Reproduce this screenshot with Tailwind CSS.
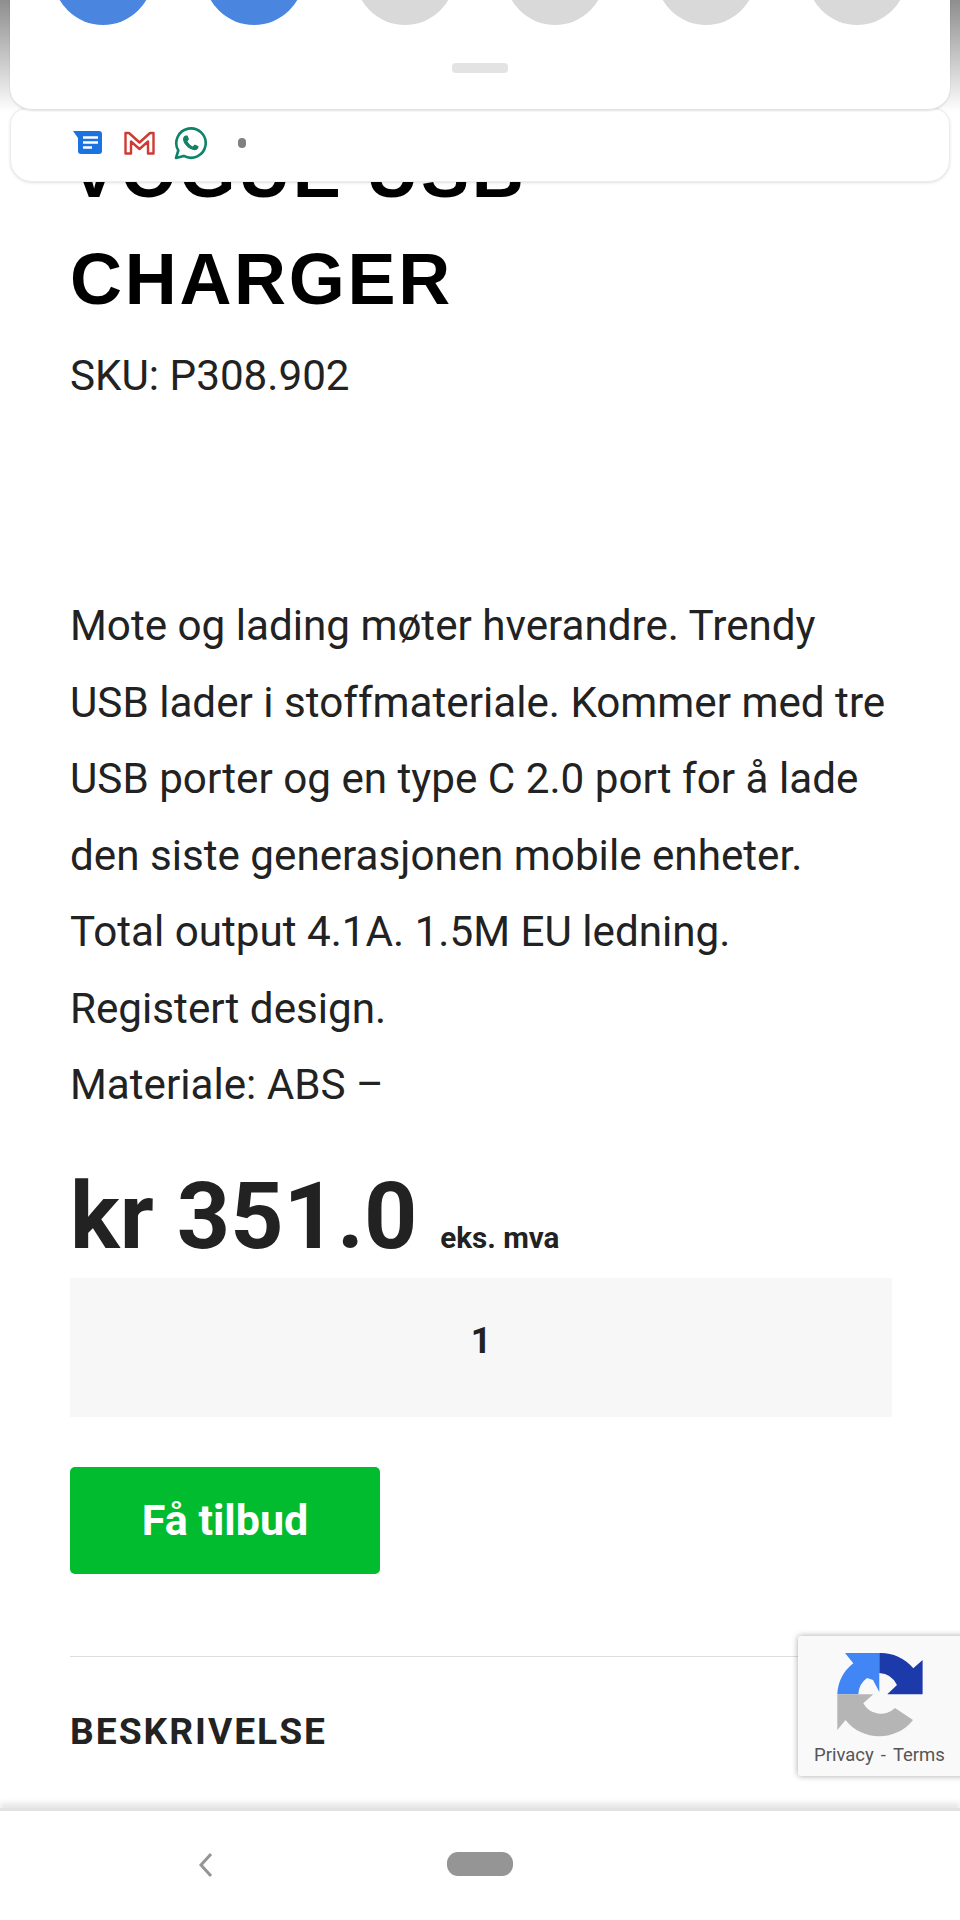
<!DOCTYPE html>
<html lang="nb">
<head>
  <meta charset="UTF-8"/>
  <meta name="viewport" content="width=device-width, initial-scale=1.0"/>
  <title>Vogue USB Charger</title>
  <script src="https://cdn.jsdelivr.net/npm/@tailwindcss/browser@4"></script>
</head>
<body class="bg-white font-['Roboto',sans-serif] text-[#222]">
<div class="relative w-[960px] h-[1920px] overflow-hidden flex flex-col">

  <!-- page content, scrolled under the notification shade -->
  <main class="flex-1 overflow-hidden px-[70px] pt-[119px]">
    <h1 class="font-['Liberation_Sans',sans-serif] font-bold text-[72px] leading-[107px] tracking-[2.7px] text-black">VOGUE USB<br/>CHARGER</h1>
    <p class="text-[42.2px] leading-[76px] mt-[5px]">SKU: P308.902</p>
    <p class="text-[42.2px] leading-[76.5px] mt-[174px]">Mote og lading møter hverandre. Trendy<br/>USB lader i stoffmateriale. Kommer med tre<br/>USB porter og en type C 2.0 port for å lade<br/>den siste generasjonen mobile enheter.<br/>Total output 4.1A. 1.5M EU ledning.<br/>Registert design.<br/>Materiale: ABS –</p>
    <div class="flex items-baseline gap-[23px] mt-[37px]">
      <span class="text-[93px] leading-[112px] font-bold">kr 351.0</span>
      <span class="text-[29.6px] font-bold">eks. mva</span>
    </div>
    <div class="w-[822px] h-[139px] bg-[#f7f7f7] mt-[5px] pt-[43px] text-center text-[36px] leading-[40px] font-bold">1</div>
    <button class="block w-[310px] h-[107px] mt-[50px] rounded-[5px] bg-[#01bc2e] text-white text-[43px] font-bold">Få tilbud</button>
    <div class="border-t border-[#dedede] mt-[82px] pt-[52px]">
      <h2 class="text-[37.2px] leading-[44px] font-bold tracking-[2px]">BESKRIVELSE</h2>
    </div>
  </main>

  <!-- navigation bar -->
  <nav class="relative h-[112px] shrink-0 bg-white border-t-[3px] border-[#e2e2e2] shadow-[0_-5px_6px_rgba(0,0,0,0.10)] flex items-center justify-center">
    <svg class="absolute left-[198px] top-[41px]" width="15" height="26" viewBox="0 0 15 26"><path d="M13 2 L3 13 L13 24" fill="none" stroke="#959595" stroke-width="3"/></svg>
    <div class="w-[66px] h-[24px] -mt-[4px] rounded-[11px] bg-[#959595]"></div>
  </nav>

  <!-- notification shade -->
  <div class="absolute left-0 top-0 w-full h-[112px] bg-gradient-to-b from-[#8e8e8e] to-white"></div>
  <div class="absolute left-[10px] top-[108px] w-[940px] h-[74px] bg-white rounded-b-[22px] rounded-t-[16px] border border-[#ececec] shadow-[0_1px_3px_rgba(0,0,0,0.12)] flex items-center pl-[62px] pb-[4px]">
    <svg width="30" height="24" viewBox="0 0 30 24"><path d="M0 0 H26 a3 3 0 0 1 3 3 V20 a3 3 0 0 1 -3 3 H8 a3 3 0 0 1 -3 -3 V7 Z" fill="#1a73e0"/><path d="M10 6.500 H25 M10 11.500 H25 M10 16.500 H19" stroke="#fff" stroke-width="2.600" fill="none"/></svg>
    <svg class="ml-[20px]" width="33" height="26" viewBox="0 0 33 26"><path d="M2.500 3 H6 L16.500 12.500 L27 3 H30.500 V23.500 H25 V11.500 L16.500 19 L8 11.500 V23.500 H2.500 Z" fill="#fff" stroke="#cf3a32" stroke-width="2.400" stroke-linejoin="round"/></svg>
    <svg class="ml-[18px]" width="33" height="33" viewBox="0 0 33 33"><path d="M2 31 L4.300 23.500 A14.700 14.700 0 1 1 9.800 28.900 Z" fill="#fff" stroke="#0f8367" stroke-width="2.600" stroke-linejoin="round"/><path d="M11.500 8.500 L13.500 8.500 L15 12.200 L13.400 14.300 C14.500 16.500 16.300 18.300 18.700 19.500 L20.800 17.600 L24.500 19.300 L24.200 21.300 C22.800 23.700 19.600 23.600 16.500 22 C13 20.200 10.500 17.300 9.300 14 C8.500 11.500 9.500 9.300 11.500 8.500 Z" fill="#0f8367"/></svg>
    <span class="ml-[31px] w-[8px] h-[10px] rounded-full bg-[#808080]"></span>
  </div>
  <div class="absolute left-[10px] top-[-40px] w-[940px] h-[150px] bg-white rounded-b-[22px] border-b border-[#e4e4e4] shadow-[0_1px_2px_rgba(0,0,0,0.12)]">
    <div class="absolute left-[43px] top-[-35px] w-[854px] flex justify-between">
      <span class="w-[100px] h-[100px] rounded-full bg-[#4a86e0]"></span>
      <span class="w-[100px] h-[100px] rounded-full bg-[#4a86e0]"></span>
      <span class="w-[100px] h-[100px] rounded-full bg-[#d9d9d9]"></span>
      <span class="w-[100px] h-[100px] rounded-full bg-[#d9d9d9]"></span>
      <span class="w-[100px] h-[100px] rounded-full bg-[#d9d9d9]"></span>
      <span class="w-[100px] h-[100px] rounded-full bg-[#d9d9d9]"></span>
    </div>
    <div class="absolute left-[442px] top-[103px] w-[56px] h-[10px] rounded-[4px] bg-[#e3e3e3]"></div>
  </div>

  <!-- reCAPTCHA badge -->
  <div class="absolute left-[798px] top-[1636px] w-[180px] h-[140px] bg-[#f9f9f9] rounded-[3px] shadow-[0_0_6px_rgba(0,0,0,0.35)]">
    <svg class="absolute left-[39px] top-[16px]" width="86" height="86" viewBox="0 0 86 86">
      <path d="M8 1 H42.300 V40 L36 28 L30 26 A21 21 0 0 0 21.300 42.300 H0.300 A42 42 0 0 1 16.300 11.300 Z" fill="#4285f4"/>
      <path d="M42.300 1 A42 42 0 0 1 76.300 16.300 L85.600 8 V42.300 H50.300 L60 33 A21 21 0 0 0 42.300 21 Z" fill="#1c3aa9"/>
      <path d="M0.300 42.300 H36.300 L26.300 51.300 A20 20 0 0 0 58 56 L76 68 A43 43 0 0 1 8.500 68 L0.300 78 Z" fill="#b5b5b5"/>
    </svg>
    <div class="absolute left-[16px] top-[106px] text-[18.5px] leading-[26px] text-[#555] whitespace-nowrap">Privacy<span class="mx-[7px]">-</span>Terms</div>
  </div>
</div>
</body>
</html>
